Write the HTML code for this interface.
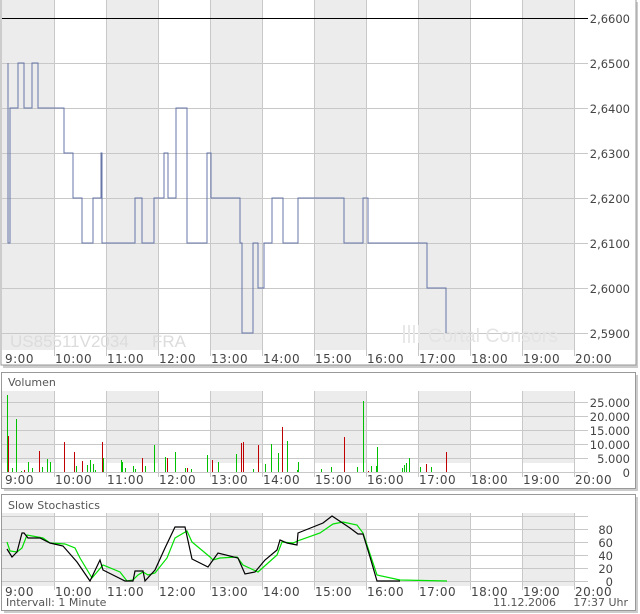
<!DOCTYPE html>
<html><head><meta charset="utf-8"><style>
html,body{margin:0;padding:0;background:#fff;width:640px;height:614px;overflow:hidden}
svg{display:block;font-family:"DejaVu Sans","Liberation Sans",sans-serif}
</style></head><body>
<svg width="640" height="614" viewBox="0 0 640 614" xmlns="http://www.w3.org/2000/svg">
<rect x="3" y="2" width="635" height="366" fill="#ccc"/>
<rect x="1" y="-1" width="635" height="366" fill="#fff" stroke="#999" stroke-width="1"/>
<rect x="4" y="375" width="634" height="116" fill="#ccc"/>
<rect x="1.5" y="372.5" width="634" height="116" fill="#fff" stroke="#999"/>
<rect x="4" y="497" width="634" height="116" fill="#ccc"/>
<rect x="1.5" y="494.5" width="634" height="116" fill="#fff" stroke="#999"/>

<g fill="#ececec">
<rect x="2" y="0" width="52" height="350"/><rect x="106" y="0" width="52" height="350"/><rect x="210" y="0" width="52" height="350"/><rect x="314" y="0" width="52" height="350"/><rect x="418" y="0" width="52" height="350"/><rect x="522" y="0" width="52" height="350"/>
</g>
<g stroke="#c8c8c8" stroke-width="1">
<line x1="2" y1="63.5" x2="588" y2="63.5"/><line x1="2" y1="108.5" x2="588" y2="108.5"/><line x1="2" y1="153.5" x2="588" y2="153.5"/><line x1="2" y1="198.5" x2="588" y2="198.5"/><line x1="2" y1="243.5" x2="588" y2="243.5"/><line x1="2" y1="288.5" x2="588" y2="288.5"/><line x1="2" y1="333.5" x2="588" y2="333.5"/>
<line x1="54.5" y1="0" x2="54.5" y2="356"/><line x1="106.5" y1="0" x2="106.5" y2="356"/><line x1="158.5" y1="0" x2="158.5" y2="356"/><line x1="210.5" y1="0" x2="210.5" y2="356"/><line x1="262.5" y1="0" x2="262.5" y2="356"/><line x1="314.5" y1="0" x2="314.5" y2="356"/><line x1="366.5" y1="0" x2="366.5" y2="356"/><line x1="418.5" y1="0" x2="418.5" y2="356"/><line x1="470.5" y1="0" x2="470.5" y2="356"/><line x1="522.5" y1="0" x2="522.5" y2="356"/><line x1="574.5" y1="0" x2="574.5" y2="356"/>
</g>
<line x1="2" y1="18.5" x2="588" y2="18.5" stroke="#000"/>
<text x="10" y="347" font-size="17" fill="#dcdcdc" font-family="Liberation Sans,sans-serif">US85511V2034</text>
<text x="152" y="347" font-size="17" fill="#dcdcdc" font-family="Liberation Sans,sans-serif">FRA</text>
<text x="428" y="342" font-size="19" fill="#e4e4e4" font-family="Liberation Sans,sans-serif" textLength="130" lengthAdjust="spacingAndGlyphs">Cortal Consors</text>
<g stroke="#e8e8e8" stroke-width="2"><line x1="404" y1="325" x2="404" y2="343"/><line x1="409" y1="325" x2="409" y2="343"/><line x1="414" y1="325" x2="414" y2="343"/><line x1="419" y1="325" x2="419" y2="343"/></g>
<polyline fill="none" stroke="#6676a8" stroke-width="1" points="8,63 8,243 10,243 10,108 18,108 18,63 24,63 24,108 32,108 32,63 38,63 38,108 64,108 64,153 73,153 73,198 82,198 82,243 93,243 93,198 101,198 101,153 102,153 102,243 135,243 135,198 142,198 142,243 154,243 154,198 164,198 164,153 168,153 168,198 176,198 176,108 187,108 187,243 207,243 207,153 211,153 211,198 240,198 240,243 242,243 242,333 253,333 253,243 258,243 258,288 264,288 264,243 272,243 272,198 283,198 283,243 298,243 298,198 344,198 344,243 363,243 363,198 368,198 368,243 427,243 427,288 446,288 446,333"/>
<g font-size="11.5" fill="#444" text-anchor="end">
<text x="630" y="23">2,6600</text><text x="630" y="68">2,6500</text><text x="630" y="113">2,6400</text><text x="630" y="158">2,6300</text><text x="630" y="203">2,6200</text><text x="630" y="248">2,6100</text><text x="630" y="293">2,6000</text><text x="630" y="338">2,5900</text>
</g>
<g font-size="12" fill="#444" letter-spacing="0.5">
<text x="5" y="363">9:00</text><text x="55" y="363">10:00</text><text x="107" y="363">11:00</text><text x="159" y="363">12:00</text><text x="211" y="363">13:00</text><text x="263" y="363">14:00</text><text x="315" y="363">15:00</text><text x="367" y="363">16:00</text><text x="419" y="363">17:00</text><text x="471" y="363">18:00</text><text x="523" y="363">19:00</text><text x="575" y="363">20:00</text>
</g>

<text x="8" y="386" font-size="11" fill="#555">Volumen</text>
<g fill="#ececec">
<rect x="2" y="391" width="52" height="81"/><rect x="106" y="391" width="52" height="81"/><rect x="210" y="391" width="52" height="81"/><rect x="314" y="391" width="52" height="81"/><rect x="418" y="391" width="52" height="81"/><rect x="522" y="391" width="52" height="81"/>
</g>
<rect x="2" y="463" width="586" height="9" fill="#fff"/>
<g stroke="#c8c8c8">
<line x1="2" y1="402.5" x2="588" y2="402.5"/><line x1="2" y1="416.5" x2="588" y2="416.5"/><line x1="2" y1="430.5" x2="588" y2="430.5"/><line x1="2" y1="444.5" x2="588" y2="444.5"/><line x1="2" y1="458.5" x2="588" y2="458.5"/><line x1="2" y1="472.5" x2="588" y2="472.5"/>
<line x1="54.5" y1="391" x2="54.5" y2="477"/><line x1="106.5" y1="391" x2="106.5" y2="477"/><line x1="158.5" y1="391" x2="158.5" y2="477"/><line x1="210.5" y1="391" x2="210.5" y2="477"/><line x1="262.5" y1="391" x2="262.5" y2="477"/><line x1="314.5" y1="391" x2="314.5" y2="477"/><line x1="366.5" y1="391" x2="366.5" y2="477"/><line x1="418.5" y1="391" x2="418.5" y2="477"/><line x1="470.5" y1="391" x2="470.5" y2="477"/><line x1="522.5" y1="391" x2="522.5" y2="477"/><line x1="574.5" y1="391" x2="574.5" y2="477"/>
</g>
<g stroke-width="1">
<g stroke="#00c000">
<line x1="7.5" y1="395" x2="7.5" y2="472"/><line x1="12.5" y1="468" x2="12.5" y2="472"/><line x1="16.5" y1="419" x2="16.5" y2="472"/><line x1="21.5" y1="471" x2="21.5" y2="472"/><line x1="28.5" y1="462" x2="28.5" y2="472"/><line x1="32.5" y1="468" x2="32.5" y2="472"/><line x1="42.5" y1="467" x2="42.5" y2="472"/><line x1="47.5" y1="459" x2="47.5" y2="472"/><line x1="50.5" y1="462" x2="50.5" y2="472"/><line x1="76.5" y1="466" x2="76.5" y2="472"/><line x1="87.5" y1="465" x2="87.5" y2="472"/><line x1="90.5" y1="460" x2="90.5" y2="472"/><line x1="93.5" y1="464" x2="93.5" y2="472"/><line x1="95.5" y1="470" x2="95.5" y2="472"/><line x1="103.5" y1="458" x2="103.5" y2="472"/><line x1="121.5" y1="460" x2="121.5" y2="472"/><line x1="122.5" y1="462" x2="122.5" y2="472"/><line x1="125.5" y1="468" x2="125.5" y2="472"/><line x1="133.5" y1="466" x2="133.5" y2="472"/><line x1="135.5" y1="469" x2="135.5" y2="472"/><line x1="145.5" y1="466" x2="145.5" y2="472"/><line x1="154.5" y1="445" x2="154.5" y2="472"/><line x1="165.5" y1="457" x2="165.5" y2="472"/><line x1="175.5" y1="452" x2="175.5" y2="472"/><line x1="185.5" y1="468" x2="185.5" y2="472"/><line x1="191.5" y1="469" x2="191.5" y2="472"/><line x1="207.5" y1="455" x2="207.5" y2="472"/><line x1="218.5" y1="462" x2="218.5" y2="472"/><line x1="236.5" y1="454" x2="236.5" y2="472"/><line x1="253.5" y1="469" x2="253.5" y2="472"/><line x1="265.5" y1="464" x2="265.5" y2="472"/><line x1="271.5" y1="444" x2="271.5" y2="472"/><line x1="278.5" y1="453" x2="278.5" y2="472"/><line x1="287.5" y1="441" x2="287.5" y2="472"/><line x1="297.5" y1="470" x2="297.5" y2="472"/><line x1="298.5" y1="462" x2="298.5" y2="472"/><line x1="321.5" y1="469" x2="321.5" y2="472"/><line x1="331.5" y1="467" x2="331.5" y2="472"/><line x1="357.5" y1="467" x2="357.5" y2="472"/><line x1="363.5" y1="401" x2="363.5" y2="472"/><line x1="371.5" y1="466" x2="371.5" y2="472"/><line x1="376.5" y1="466" x2="376.5" y2="472"/><line x1="377.5" y1="447" x2="377.5" y2="472"/><line x1="402.5" y1="468" x2="402.5" y2="472"/><line x1="404.5" y1="465" x2="404.5" y2="472"/><line x1="406.5" y1="463" x2="406.5" y2="472"/><line x1="409.5" y1="458" x2="409.5" y2="472"/><line x1="420.5" y1="467" x2="420.5" y2="472"/><line x1="431.5" y1="467" x2="431.5" y2="472"/>
</g>
<g stroke="#c00000">
<line x1="8.5" y1="436" x2="8.5" y2="472"/><line x1="24.5" y1="470" x2="24.5" y2="472"/><line x1="39.5" y1="451" x2="39.5" y2="472"/><line x1="64.5" y1="442" x2="64.5" y2="472"/><line x1="74.5" y1="452" x2="74.5" y2="472"/><line x1="82.5" y1="461" x2="82.5" y2="472"/><line x1="102.5" y1="442" x2="102.5" y2="472"/><line x1="142.5" y1="458" x2="142.5" y2="472"/><line x1="167.5" y1="458" x2="167.5" y2="472"/><line x1="187.5" y1="468" x2="187.5" y2="472"/><line x1="212.5" y1="460" x2="212.5" y2="472"/><line x1="241.5" y1="443" x2="241.5" y2="472"/><line x1="243.5" y1="442" x2="243.5" y2="472"/><line x1="258.5" y1="445" x2="258.5" y2="472"/><line x1="282.5" y1="427" x2="282.5" y2="472"/><line x1="344.5" y1="437" x2="344.5" y2="472"/><line x1="368.5" y1="471" x2="368.5" y2="472"/><line x1="426.5" y1="464" x2="426.5" y2="472"/><line x1="446.5" y1="452" x2="446.5" y2="472"/>
</g>
</g>
<g font-size="11.5" fill="#444" text-anchor="end">
<text x="630" y="407">25.000</text><text x="630" y="421">20.000</text><text x="630" y="435">15.000</text><text x="630" y="449">10.000</text><text x="630" y="463">5.000</text><text x="630" y="477">0</text>
</g>
<g font-size="12" fill="#444" letter-spacing="0.5">
<text x="5" y="484">9:00</text><text x="55" y="484">10:00</text><text x="107" y="484">11:00</text><text x="159" y="484">12:00</text><text x="211" y="484">13:00</text><text x="263" y="484">14:00</text><text x="315" y="484">15:00</text><text x="367" y="484">16:00</text><text x="419" y="484">17:00</text><text x="471" y="484">18:00</text><text x="523" y="484">19:00</text><text x="575" y="484">20:00</text>
</g>

<text x="8" y="509" font-size="11" fill="#555">Slow Stochastics</text>
<g fill="#ececec">
<rect x="2" y="513" width="52" height="73"/><rect x="106" y="513" width="52" height="73"/><rect x="210" y="513" width="52" height="73"/><rect x="314" y="513" width="52" height="73"/><rect x="418" y="513" width="52" height="73"/><rect x="522" y="513" width="52" height="73"/>
</g>
<g stroke="#c8c8c8">
<line x1="2" y1="516.5" x2="588" y2="516.5"/><line x1="2" y1="529.5" x2="588" y2="529.5"/><line x1="2" y1="542.5" x2="588" y2="542.5"/><line x1="2" y1="555.5" x2="588" y2="555.5"/><line x1="2" y1="568.5" x2="588" y2="568.5"/><line x1="2" y1="581.5" x2="588" y2="581.5"/>
<line x1="54.5" y1="513" x2="54.5" y2="590"/><line x1="106.5" y1="513" x2="106.5" y2="590"/><line x1="158.5" y1="513" x2="158.5" y2="590"/><line x1="210.5" y1="513" x2="210.5" y2="590"/><line x1="262.5" y1="513" x2="262.5" y2="590"/><line x1="314.5" y1="513" x2="314.5" y2="590"/><line x1="366.5" y1="513" x2="366.5" y2="590"/><line x1="418.5" y1="513" x2="418.5" y2="590"/><line x1="470.5" y1="513" x2="470.5" y2="590"/><line x1="522.5" y1="513" x2="522.5" y2="590"/><line x1="574.5" y1="513" x2="574.5" y2="590"/>
</g>
<polyline fill="none" stroke="#00e000" stroke-width="1.2" points="7,542 10,551 17,552 22,548 27,535 43,538 50,543 65,544 75,548 80,558 92,578 103,565 120,572 127,581 133,580 138,575 143,572 148,575 155,573 167,558 175,538 187,531 192,542 210,557 213,560 220,558 237,557 243,565 258,572 277,555 282,542 293,543 300,540 320,533 333,524 343,522 357,525 363,533 377,575 400,580 447,581"/>
<polyline fill="none" stroke="#000" stroke-width="1.2" points="7,549 12,557 17,552 22,533 24,533 28,538 40,538 50,543 63,546 77,562 90,581 100,560 103,570 125,581 133,581 135,571 143,571 145,581 155,570 165,548 175,527 185,527 192,559 208,567 218,553 238,558 245,574 255,572 265,560 277,550 280,540 287,543 297,545 298,533 323,523 332,516 350,528 358,534 363,534 370,557 377,581 400,581"/>
<g font-size="11.5" fill="#444" text-anchor="end">
<text x="613" y="534">80</text><text x="613" y="547">60</text><text x="613" y="560">40</text><text x="613" y="573">20</text><text x="613" y="586">0</text>
</g>
<g font-size="12" fill="#444" letter-spacing="0.5">
<text x="5" y="596">9:00</text><text x="55" y="596">10:00</text><text x="107" y="596">11:00</text><text x="159" y="596">12:00</text><text x="211" y="596">13:00</text><text x="263" y="596">14:00</text><text x="315" y="596">15:00</text><text x="367" y="596">16:00</text><text x="419" y="596">17:00</text><text x="471" y="596">18:00</text><text x="523" y="596">19:00</text><text x="575" y="596">20:00</text>
</g>
<text x="6" y="606" font-size="11" fill="#555">Intervall: 1 Minute</text>
<text x="556" y="606" font-size="11" fill="#555" text-anchor="end">11.12.2006</text>
<text x="628" y="606" font-size="11" fill="#555" text-anchor="end">17:37 Uhr</text>
</svg>
</body></html>
